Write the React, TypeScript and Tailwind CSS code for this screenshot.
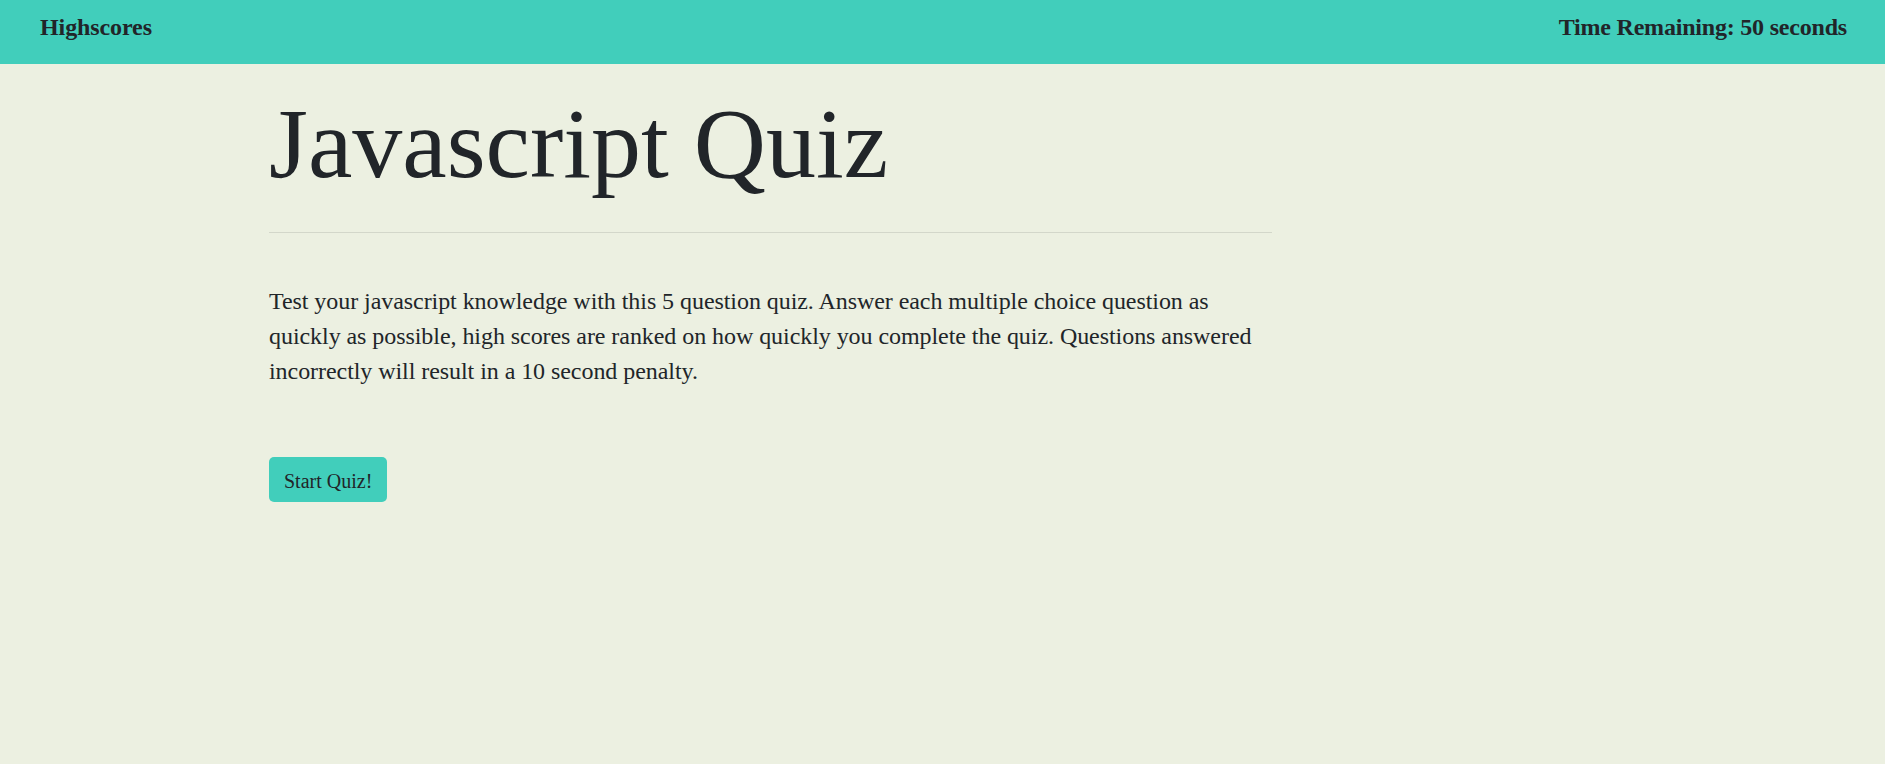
import React from "react";

const serif = { fontFamily: '"Liberation Serif", "Times New Roman", serif' };

export default function App() {
  return (
    <div className="min-h-[764px] bg-[#ecf0e1] text-[#212529]" style={serif}>
      <header className="flex h-[64px] items-start justify-between bg-[#41cebb] pl-[40px] pr-[38px] pt-[13px]">
        <a className="text-[24px] font-bold leading-[29px] tracking-[-0.1px] text-[#212529]">Highscores</a>
        <span className="text-[24px] font-bold leading-[29px] tracking-[-0.2px]">Time Remaining: 50 seconds</span>
      </header>

      <main className="pl-[269px]">
        <section className="w-[1003px] pt-[20px]">
          <h1 className="text-[100px] font-normal leading-[120px]">Javascript Quiz</h1>
          <hr className="mt-[28px] border-0 border-t border-[#d3d7ca]" />
          <p className="mt-[51px] text-[24px] leading-[35px] tracking-[-0.06px]">
            Test your javascript knowledge with this 5 question quiz. Answer each multiple choice
            question as quickly as possible, high scores are ranked on how quickly you complete the
            quiz. Questions answered incorrectly will result in a 10 second penalty.
          </p>
          <button className="mt-[68px] flex h-[45px] items-center rounded-[5px] bg-[#41cebb] px-[15px] pt-[2px] text-[20px] leading-[30px] text-[#212529]">
            Start Quiz!
          </button>
        </section>
      </main>
    </div>
  );
}
